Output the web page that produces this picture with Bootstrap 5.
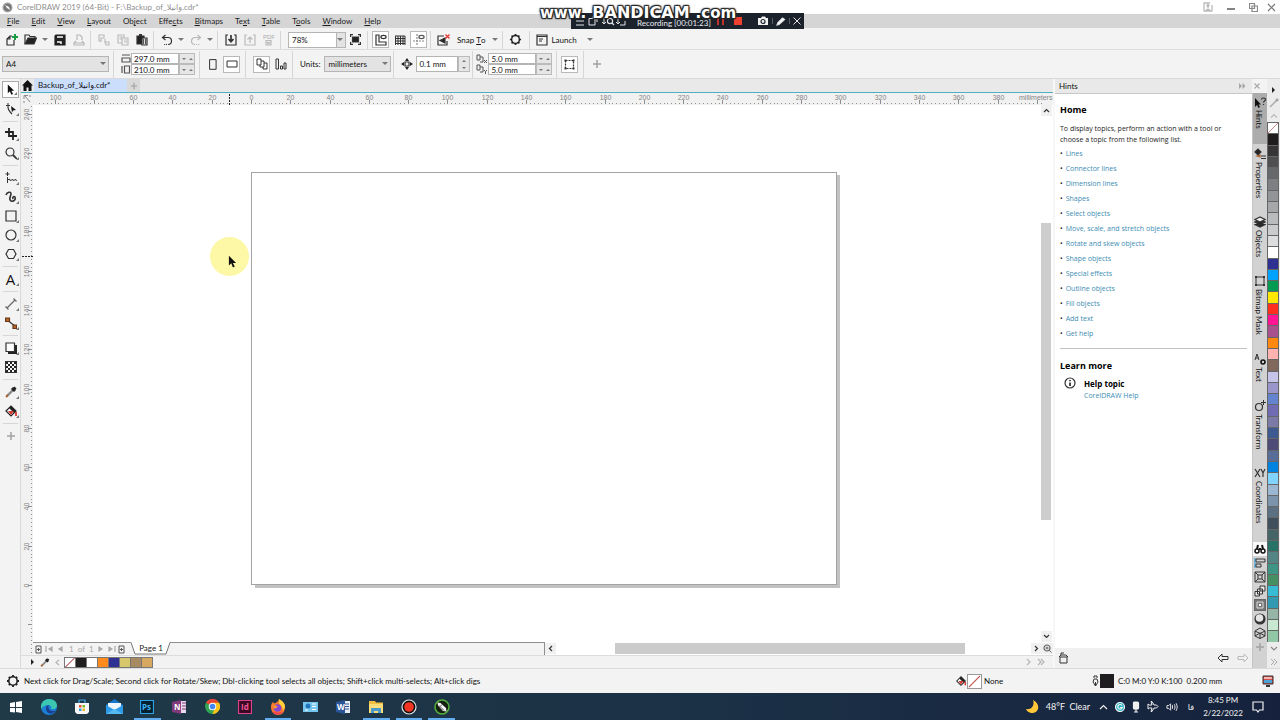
<!DOCTYPE html>
<html lang="en">
<head>
<meta charset="utf-8">
<meta name="viewport" content="width=device-width, initial-scale=1">
<title>CorelDRAW 2019 (64-Bit)</title>
<link rel="stylesheet" href="https://cdn.jsdelivr.net/npm/bootstrap@5.3.0/dist/css/bootstrap.min.css">
<style>
:root{--bar:#f3f3f3}
body{font:8px/12px Lato,"DejaVu Sans",sans-serif;color:#111;background:var(--bar);height:100vh;overflow:hidden}
svg{display:block;fill:none;stroke:#333;stroke-width:1.2;flex:none}
svg text{stroke:none}
button,select,input{font:inherit;color:inherit;border-radius:0}
button{border:0;background:none;padding:0;display:flex;align-items:center;justify-content:center;flex:none}
.titlebar{height:14px;background:#fff;color:#8e8e8e;padding:0 4px 0 2px}
.winctl{gap:14px}
.winctl button:last-child{margin-left:-5px}
.menubar{height:14px;background:#d5d5d5;padding-left:7px;color:#1c1c1c;gap:12px}
.menubar a{color:inherit;text-decoration:none;line-height:15px}
.menubar u{text-underline-offset:1px}
.toolrow{height:22px;padding:2px 0 0 2px;border-bottom:1px solid #dcdcdc}
.proprow{height:29px;padding-left:2px;border-bottom:1px solid #d9d9d9}
.tbtn{width:19px;height:19px}
.boxed{background:#fff;border:1px solid #b9b9b9;width:17px;height:17px;margin:0 1px}
.caret{width:10px;height:16px;justify-content:flex-start;padding-left:2px}
.caret::before,.drop::after{content:"";border:3px solid transparent;border-top:3px solid #777;border-bottom:0}
.vline{width:1px;height:18px;background:#d6d6d6;margin:0 3px 0 2px;flex:none}
.proprow .vline{height:27px}
.drop{position:relative}
.drop::after{position:absolute;right:3px;top:6px;pointer-events:none}
.drop select{appearance:none;border:1px solid #b5b5b5;background:#e3e3e3;height:16px;padding:0 3px;width:100%;display:block;line-height:12px}
.drop.zoomlevel select{background:linear-gradient(90deg,#fff 47px,#b5b5b5 47px,#b5b5b5 48px,#e3e3e3 48px)}
.pair{width:48px}
.pair input,.nudge input{border:1px solid #b5b5b5;background:#fff;height:11px;padding:0 2px;line-height:9px;min-width:0;display:block}
.spin{border:1px solid #bbb;background:#e6e6e6;width:16px;height:11px}
.spin i{border:2px solid transparent;width:0;height:0}
.spin .dn{border-top:2px solid #777;border-bottom:0}
.spin .up{border-bottom:2px solid #777;border-top:0}
.toolbox{width:21px;padding:1px 0 0 1px;border-right:1px solid #d9d9d9;background:var(--bar)}
.toolbox button{width:19px;height:19px;position:relative}
.toolbox .fly::after{content:"";position:absolute;right:1px;bottom:2px;border-left:3px solid transparent;border-bottom:3px solid #777}
.toolbox .active{background:#fff;border:1px solid #aaa;width:17px;height:17px;margin:1px}
.hline{width:15px;height:1px;background:#d6d6d6;margin:3px 2px 2px}
.tabstrip{height:14px;background:#e9e9e9;border-bottom:1px solid #4fb0c4}
.doctab{background:#cbdffc;height:13px;width:93px;padding-left:4px;line-height:13px}
.plustab{background:#d9d9d9;height:13px;width:13px}
.rulerrow{height:12px}
.corner,.vruler{width:12px;background:#f1f1f1}
.hruler{background:#f1f1f1}
svg.ruler{stroke:#8f8f8f;stroke-width:1;width:100%}
svg.ruler text{font:7px "Liberation Sans",sans-serif;fill:#858585}
.canvas{background:#fff;position:relative}
.sheet{position:absolute;left:218px;top:67px;width:586px;height:413px;border:1px solid #a3a3a3;background:#fff;box-shadow:4px 3px 0 -1px #c2c2c2,3px 3px 0 0 #c2c2c2;clip-path:polygon(0 0,586px 0,586px 3px,590px 3px,590px 417px,4px 417px,4px 413px,0 413px)}
.spot{position:absolute;left:177px;top:132px;width:39px;height:39px;border-radius:50%;background:#fcf8a6}
.spot svg{position:absolute;left:18px;top:18px}
.vscroll{width:12px;background:#fff}
.vscroll button{width:11px;height:11px;background:#f0f0f0}
.vthumb{background:#cdcdcd;height:297px;width:10px;margin-top:107px}
.navrow{height:13px;background:#fff}
.pagenav{width:512px;background:var(--bar);border-top:1px solid #8e8e8e;border-right:1px solid #8e8e8e;color:#a8a8a8;padding-left:1px}
.pagenav svg{stroke:#a8a8a8}
.pagetab{position:relative;width:40px;height:13px;margin-top:-1px;text-align:center;color:#222}
.pagetab svg{position:absolute;left:0;top:0}
.pagetab span{position:relative}
.hthumb{background:#cbcbcb;height:11px;width:350px;margin-left:59px}
.navbtn{width:11px;height:11px;background:#f0f0f0}
.palrow{height:13px;background:#f2f2f2;border-top:1px solid #dcdcdc}
.sw{width:12px;height:11px;border:1px solid #777;margin-right:-1px}
.hints{width:199px;border-left:2px solid #f7f7f7;background:#fff}
.hinthead{height:15px;background:#e9e9e9;border-bottom:1px solid #c6c6c6;padding:0 4px 0 4px;line-height:13px}
.hintbody{padding:9px 5px 0 5px;font:7px/11px "Open Sans",sans-serif;color:#1d1d1d}
.hintbody h1,.hintbody h2{font:bold 9px/14px "Open Sans",sans-serif;color:#000;margin:0}
.hintbody h3{font:bold 8px/13px "Open Sans",sans-serif;color:#000;margin:0}
.hintbody p{margin:6px 0 1px}
.hintbody a{color:#3e8db3;text-decoration:none}
.hintbody ul{list-style:none;padding:0;margin:0}
.hintbody li{line-height:15px;display:flex;gap:3px}
.hintbody li::before{content:"•"}
.hintbody hr{margin:7px 0 10px;border-color:#999;opacity:.6}
.hintfoot{height:20px;background:#f0f0f0;padding:0 3px}
.dockers{width:15px;background:#d2d2d2;border-left:1px solid #c4c4c4;margin-top:14px}
.dockers .dtab{width:14px;flex-direction:column;justify-content:flex-start;gap:2px;padding:4px 0 14px;line-height:12px}
.dtab span{writing-mode:vertical-rl;padding-right:3px}
.dockers .current{background:#acacac;height:51px;padding-bottom:0}
.dockers .mini{width:14px;height:14px}
.minis{margin-bottom:14px}
.colors{width:13px;background:#ececec}
.colors .cell{flex:1 1 0;width:12px;border:1px solid #666;border-bottom-width:0;min-height:0}
.colors button{width:13px;height:13px}
.statusbar{height:25px;background:var(--bar);border-top:1px solid #dadada;padding:0 6px}
.taskbar{height:27px;background:linear-gradient(90deg,#203a48,#1b3146 55%,#16223d);color:#f2f2f2}
.apps{display:grid;grid-template-columns:repeat(14,1fr);width:458px}
.apps button{height:27px;position:relative;width:100%}
.apps .open::after{content:"";position:absolute;left:3px;right:3px;bottom:0;height:2px;background:#62aef0}
.tray svg{stroke:#f0f0f0}
.tray{gap:7px}
.temp{font-size:9px;width:46px}
.gap-tray{margin-right:3px}
.clock{line-height:13px;width:44px}
.recbar{position:absolute;left:571px;top:13px;width:233px;height:16px;background:#1b222c;color:#e9ebee;font-size:8px;padding-left:5px}
.recbar svg{stroke:#e0e3e6}
.rectime{margin:3px 7px 0 9px;width:73px}
.mark-url{position:absolute;left:540px;top:4px;height:18px;display:flex;align-items:baseline;gap:6px;color:#fff;font:bold 15px/18px "DejaVu Sans",sans-serif;text-shadow:-1px -1px 1px #222,1px -1px 1px #222,-1px 1px 1px #222,1px 1px 1px #222,0 0 3px #444}
.mark-url b{font-size:16px}
</style>
</head>
<body class="d-flex flex-column">

<svg width="0" height="0" class="position-absolute">
<symbol id="gear" viewBox="0 0 14 14"><circle cx="7" cy="7" r="4.2" stroke="#222" stroke-width="1.6"/><path d="M7 1v2M7 11v2M1 7h2M11 7h2M2.8 2.8l1.3 1.3M9.900 9.900l1.3 1.3M2.8 11.2l1.3-1.3M9.900 4.1l1.3-1.3" stroke="#222" stroke-width="1.8"/></symbol>
<symbol id="bucket" viewBox="0 0 14 14"><path d="M2 7l5-5 5 5-5 5z" fill="#fff" stroke="#222"/><path d="M7 2l5 5-2 2-5-5z" fill="#222" stroke="none"/><path d="M4 7h6l-3 4z" fill="#d43a33" stroke="none"/><path d="M12 8v4" stroke="#d43a33" stroke-width="1.8"/></symbol>
<symbol id="dropper" viewBox="0 0 14 14"><path d="M3 11l6-6" stroke="#8a8a8a" stroke-width="2.4"/><path d="M8 3l3 3M9.500 4.500l2-2" stroke="#222" stroke-width="3"/><path d="M2 12l2-2" stroke="#a8622d" stroke-width="2"/></symbol>
<symbol id="plus" viewBox="0 0 10 10"><path d="M5 1v8M1 5h8" stroke="#a2a2a2" stroke-width="1.5"/></symbol>
<symbol id="pointer" viewBox="0 0 10 14"><path d="M1 0v11l2.600-2.500L5.500 13l2-1-2-4H9z" fill="#111" stroke="none"/></symbol>
<symbol id="pages" viewBox="0 0 14 14"><path d="M2 2h4v6H2zM6 4h3v6H5V8M9 6h3v6H8v-2" stroke-width="1"/></symbol>
<symbol id="slash" viewBox="0 0 14 14" preserveAspectRatio="none"><path d="M1 13L13 1" stroke="#c0504a"/></symbol>
</svg>

<header class="titlebar d-flex align-items-center">
  <svg width="11" height="11" viewBox="0 0 11 11"><circle cx="5.500" cy="5.500" r="4.500" fill="#777" stroke="#aaa"/><path d="M3 3l4 2 1 3-3-2z" fill="#fff" stroke="none"/></svg>
  <span class="ms-1">CorelDRAW 2019 (64-Bit) - F:\Backup_of_وانيلا.cdr*</span>
  <div class="winctl ms-auto d-flex align-items-center">
    <button aria-label="Account"><svg width="10" height="10" viewBox="0 0 10 10" style="stroke:#bbb"><path d="M9 3v6H1V1h6M3 7.500h4M5 3v3" stroke-width="1.300"/><circle cx="5" cy="3.500" r="1" fill="#aaa"/></svg></button>
    <button aria-label="Minimize"><svg width="8" height="10" viewBox="0 0 8 10"><path d="M0 7h8" stroke="#777" stroke-width="1.800"/></svg></button>
    <button aria-label="Restore"><svg width="9" height="9" viewBox="0 0 9 9"><path d="M.5.500h5v5h-5zM3 3h5.500v5.500H3z" fill="#fff" stroke="#888"/></svg></button>
    <button aria-label="Close"><svg width="9" height="9" viewBox="0 0 9 9"><path d="M1 1l7 7M8 1L1 8" stroke="#777"/></svg></button>
  </div>
</header>

<nav class="menubar d-flex">
  <a href="#"><u>F</u>ile</a><a href="#"><u>E</u>dit</a><a href="#"><u>V</u>iew</a><a href="#"><u>L</u>ayout</a><a href="#">Ob<u>j</u>ect</a><a href="#">Effe<u>c</u>ts</a><a href="#"><u>B</u>itmaps</a><a href="#">Te<u>x</u>t</a><a href="#"><u>T</u>able</a><a href="#">T<u>o</u>ols</a><a href="#"><u>W</u>indow</a><a href="#"><u>H</u>elp</a>
</nav>

<div class="toolrow d-flex align-items-center">
  <button class="tbtn" aria-label="New"><svg width="13" height="13" viewBox="0 0 13 13"><path d="M7 3H5L2 6v6h7V7M2 6h3V3"/><path d="M10 1v6M7 4h6" stroke="#1b9a45" stroke-width="2"/></svg></button>
  <button class="tbtn" aria-label="Open"><svg width="13" height="13" viewBox="0 0 13 13"><path d="M1 11V2h4l1 1.500h5V6"/><path d="M1 11l3-6h8.500L10 11z" fill="#222"/></svg></button>
  <button class="caret" aria-label="Recent files"></button>
  <button class="tbtn" aria-label="Save"><svg width="12" height="12" viewBox="0 0 12 12"><path d="M1 2l1-1h9v10H1z" fill="#222" stroke="#222"/><path d="M3 3h6M3 8h4v2" stroke="#fff" stroke-width="1.500"/></svg></button>
  <button class="tbtn" aria-label="Print"><svg width="12" height="12" viewBox="0 0 12 12" style="stroke:#b8b8b8"><path d="M4 6V1h3l2 2v3M3 7L1 9v2h10V9L9 7M1 9h10"/></svg></button>
  <span class="vline"></span>
  <button class="tbtn" aria-label="Cut"><svg width="12" height="12" viewBox="0 0 12 12" style="stroke:#bcbcbc"><path d="M1 1h5v3H3v3H1zM3 7v1M7 5v4M7 8h4v3H8z"/></svg></button>
  <button class="tbtn" aria-label="Copy"><svg width="12" height="12" viewBox="0 0 12 12" style="stroke:#bcbcbc"><path d="M5 9H1V1h6v3M5 4h6v7H5zM2.500 3h3M2.500 5h2M7 6h3M7 8h3"/></svg></button>
  <button class="tbtn" aria-label="Paste"><svg width="12" height="12" viewBox="0 0 12 12"><path d="M1 2h7v8H1z" fill="#222"/><path d="M3 1h3" stroke-width="2"/><path d="M6 4h5v7H6z" fill="#ddd"/><path d="M7.500 5v5M9.500 5v5" stroke-width=".8"/></svg></button>
  <span class="vline"></span>
  <button class="tbtn" aria-label="Undo"><svg width="12" height="12" viewBox="0 0 12 12"><path d="M4.500 1L1.500 3.500 4.500 6M2 3.500h5a3.500 3.500 0 010 7" /><path d="M6 10.500H3" stroke-dasharray="1.200 1"/></svg></button>
  <button class="caret" aria-label="Undo list"></button>
  <button class="tbtn" aria-label="Redo"><svg width="12" height="12" viewBox="0 0 12 12" style="stroke:#b8b8b8"><path d="M7.500 1l3 2.500-3 2.500M10 3.500H5a3.500 3.500 0 000 7"/><path d="M6 10.500h4" stroke-dasharray="1.200 1"/></svg></button>
  <button class="caret" aria-label="Redo list"></button>
  <span class="vline"></span>
  <button class="tbtn" aria-label="Import"><svg width="12" height="12" viewBox="0 0 12 12"><path d="M3 1H1v10h10V1H9"/><path d="M6 1v6M3.500 5L6 7.800 8.500 5" stroke-width="1.700"/></svg></button>
  <button class="tbtn" aria-label="Export"><svg width="12" height="12" viewBox="0 0 12 12" style="stroke:#bbb"><path d="M3 1H1v10h10V1H9M6 9V3M3.500 5.500L6 3l2.500 2.500"/></svg></button>
  <button class="tbtn" aria-label="Publish to PDF"><svg width="12" height="12" viewBox="0 0 12 12" style="stroke:#bbb"><path d="M3 6.500h5V11H3zM4 8l3 2M7 8l-3 2"/><text x="0" y="5" font-size="6" font-family="Liberation Sans" fill="#aaa">PDF</text></svg></button>
  <span class="vline"></span>
  <div class="drop zoomlevel ms-1" style="width:58px"><select aria-label="Zoom level"><option>78%</option></select></div>
  <button class="tbtn" aria-label="Full-screen preview"><svg width="11" height="11" viewBox="0 0 11 11"><path d="M.6 3V.6H3M8 .6h2.400V3M10.400 8v2.400H8M3 10.400H.6V8"/><path d="M2.500 3h6v5h-6z" fill="#222"/></svg></button>
  <span class="vline"></span>
  <button class="tbtn boxed" aria-label="Show rulers"><svg width="12" height="12" viewBox="0 0 12 12"><path d="M1 1h3v7h7v3H1z"/><ellipse cx="8.500" cy="3" rx="2.600" ry="1.600"/></svg></button>
  <button class="tbtn" aria-label="Show grid"><svg width="12" height="12" viewBox="0 0 12 12"><path d="M1 2h10M1 4.500h10M1 7h10M1 9.500h10M1.500 2v9M4 2v9M6.500 2v9M9 2v9M11 2v9" stroke-width="1"/></svg></button>
  <button class="tbtn boxed" aria-label="Show guidelines"><svg width="12" height="12" viewBox="0 0 12 12" style="stroke:#888"><path d="M4 0v12M0 7h12" stroke-dasharray="2 1"/><ellipse cx="8.500" cy="3" rx="2.600" ry="1.600" stroke="#555"/></svg></button>
  <span class="vline"></span>
  <button class="tbtn" aria-label="Snap off"><svg width="13" height="12" viewBox="0 0 13 12"><path d="M7 2H1v9h9V7" /><path d="M3 6.500L8 4v5z" fill="#222"/><path d="M8.500.500l4 4M12.500.500l-4 4" stroke="#e0362f" stroke-width="1.300"/></svg></button>
  <button class="ms-1">Snap&nbsp;<u>T</u>o</button>
  <button class="caret ms-1" aria-label="Snap options"></button>
  <span class="vline"></span>
  <button class="tbtn" aria-label="Options"><svg width="13" height="13"><use href="#gear"/></svg></button>
  <span class="vline ms-1"></span>
  <button class="tbtn" aria-label="Application launcher"><svg width="12" height="12" viewBox="0 0 12 12"><path d="M1 1h10v10H1zM1 2.500h10"/><path d="M3 5h4M3 7h3" stroke-width="1"/></svg></button>
  <button>Launch</button>
  <button class="caret ms-2" aria-label="Launch list"></button>
</div>

<div class="proprow d-flex align-items-center">
  <div class="drop" style="width:107px"><select aria-label="Page size"><option>A4</option></select></div>
  <span class="vline ms-1"></span>
  <svg class="ms-1" width="10" height="22" viewBox="0 0 10 22"><path d="M1 5h8v4H1zM1 2h8M3.500 13h5v7h-5zM1 13v7" stroke="#555"/></svg>
  <div class="pair d-flex flex-column"><input type="text" aria-label="Page width" value="297.0 mm"><input type="text" aria-label="Page height" value="210.0 mm"></div>
  <div><div class="spin d-flex align-items-center justify-content-around"><i class="dn"></i><i class="up"></i></div><div class="spin d-flex align-items-center justify-content-around"><i class="dn"></i><i class="up"></i></div></div>
  <span class="vline ms-1"></span>
  <button class="tbtn" aria-label="Portrait"><svg width="8" height="11" viewBox="0 0 8 11"><path d="M.6.600h6.500v9.700H.6z" stroke-width="1"/></svg></button>
  <button class="tbtn boxed" aria-label="Landscape"><svg width="12" height="8" viewBox="0 0 12 8"><path d="M1 1h10v6H1z" stroke-width="1"/></svg></button>
  <span class="vline ms-1"></span>
  <button class="tbtn boxed ms-1" aria-label="All pages"><svg width="14" height="14"><use href="#pages"/></svg></button>
  <button class="tbtn" aria-label="Current page"><svg width="12" height="12" viewBox="0 0 12 12"><path d="M1 1h2.500v10H1zM5.500 8h2v3h-2zM9 5h2v6H9z" stroke-width="1"/></svg></button>
  <span class="vline"></span>
  <label class="ms-1" for="units">Units:</label>
  <div class="drop ms-1" style="width:67px"><select id="units"><option>millimeters</option></select></div>
  <span class="vline"></span>
  <button class="tbtn" aria-label="Nudge distance icon"><svg width="12" height="12" viewBox="0 0 12 12"><path d="M6 0l2 3H4zM6 12l2-3H4zM0 6l3-2v4zM12 6L9 4v4z" fill="#222" stroke="none"/><path d="M4 4h4v4H4z"/></svg></button>
  <div class="nudge d-flex"><input type="text" aria-label="Nudge distance" value="0.1 mm" style="width:42px;height:16px"><div class="spin d-flex flex-column align-items-center justify-content-around" style="width:12px;height:16px"><i class="up"></i><i class="dn"></i></div></div>
  <span class="vline"></span>
  <svg width="12" height="22" viewBox="0 0 12 22"><path d="M1 2h3v5H1zM4 4h3v5H4M1 12h3v5H1zM4 14h3v5H4M8 7l3 3M11 7l-3 3M8 17l1.500 1.500L11 17M9.500 18.500V21" stroke="#555" stroke-width="1"/></svg>
  <div class="pair d-flex flex-column"><input type="text" aria-label="Duplicate distance X" value="5.0 mm"><input type="text" aria-label="Duplicate distance Y" value="5.0 mm"></div>
  <div><div class="spin d-flex align-items-center justify-content-around"><i class="dn"></i><i class="up"></i></div><div class="spin d-flex align-items-center justify-content-around"><i class="dn"></i><i class="up"></i></div></div>
  <span class="vline ms-1"></span>
  <button class="tbtn boxed" aria-label="Treat as filled"><svg width="13" height="13" viewBox="0 0 13 13"><path d="M2.500 2.500h8v8h-8z" stroke-dasharray="2 1"/><path d="M1.500 2.500h2M9.500 2.500h2M1.500 10.500h2M9.500 10.500h2" stroke-width="2"/></svg></button>
  <span class="vline ms-1"></span>
  <button class="tbtn" aria-label="Customize"><svg width="10" height="10"><use href="#plus"/></svg></button>
</div>

<main class="d-flex flex-grow-1" style="min-height:0">
  <aside class="toolbox flex-shrink-0 d-flex flex-column">
    <button class="fly active" aria-label="Pick"><svg width="8" height="12"><use href="#pointer"/></svg></button>
    <button class="fly" aria-label="Shape"><svg width="12" height="13" viewBox="0 0 12 13"><path d="M3 1v4M1 3.500h4" stroke-width="1"/><path d="M3 5c0 3 2 5 4 7"/><path d="M6 4l5 4-3 .5-1 2z" fill="#111" stroke="none"/></svg></button>
    <span class="hline"></span>
    <button class="fly" aria-label="Crop"><svg width="12" height="12" viewBox="0 0 12 12"><path d="M4 0v8h8M0 4h8v8" stroke="#222" stroke-width="1.800"/></svg></button>
    <button class="fly" aria-label="Zoom"><svg width="12" height="12" viewBox="0 0 12 12"><circle cx="5" cy="5" r="4"/><path d="M8 8l4 4" stroke-width="1.800"/></svg></button>
    <span class="hline"></span>
    <button class="fly" aria-label="Freehand"><svg width="12" height="12" viewBox="0 0 12 12"><path d="M2.500 0v4M.500 2h4M2.500 5v6M2.500 8l2-1 1 2 2-2 1 2 2-2 1 2" stroke-width="1"/></svg></button>
    <button class="fly" aria-label="Artistic media"><svg width="12" height="12" viewBox="0 0 12 12"><path d="M1 4C2 1 6 0 6 3c0 2-3 5 0 7 3 1 5-2 4-4-1-1-3 0-2 2" stroke-width="1.600"/></svg></button>
    <button class="fly" aria-label="Rectangle"><svg width="12" height="12" viewBox="0 0 12 12"><path d="M1 1h10v10H1z"/></svg></button>
    <button class="fly" aria-label="Ellipse"><svg width="12" height="12" viewBox="0 0 12 12"><circle cx="6" cy="6" r="5"/></svg></button>
    <button class="fly" aria-label="Polygon"><svg width="12" height="12" viewBox="0 0 12 12"><path d="M3.500 1.500h5L11 6l-2.500 4.500h-5L1 6z"/></svg></button>
    <span class="hline"></span>
    <button class="fly" aria-label="Text"><span style="font:15px/16px 'Open Sans',sans-serif">A</span></button>
    <span class="hline"></span>
    <button class="fly" aria-label="Dimension"><svg width="12" height="12" viewBox="0 0 12 12"><path d="M2 10l8-8M8.500.500l3 3M.500 8.500l3 3" stroke="#666"/></svg></button>
    <button class="fly" aria-label="Connector"><svg width="12" height="12" viewBox="0 0 12 12"><path d="M2 3l8 6"/><path d="M.5 1h4v3.500h-4zM8 8h3.500v3.500H8z" fill="#b5662a" stroke="#6b3a18"/></svg></button>
    <span class="hline"></span>
    <button class="fly" aria-label="Drop shadow"><svg width="12" height="12" viewBox="0 0 12 12"><path d="M3 11h8V3" stroke="#222" stroke-width="2"/><path d="M1 1h8.500v8.500H1z" fill="#fff"/></svg></button>
    <button aria-label="Transparency"><svg width="12" height="12" viewBox="0 0 12 12"><path d="M.5.500h11v11H.5z"/><path d="M1 2h10M1 6h10M1 10h10" stroke="#222" stroke-width="2" stroke-dasharray="2 2"/><path d="M3 4h8M3 8h8" stroke="#222" stroke-width="2" stroke-dasharray="2 2"/></svg></button>
    <span class="hline"></span>
    <button class="fly" aria-label="Color eyedropper"><svg width="14" height="14"><use href="#dropper"/></svg></button>
    <button class="fly" aria-label="Interactive fill"><svg width="14" height="14"><use href="#bucket"/></svg></button>
    <span class="hline"></span>
    <button aria-label="Customize toolbox"><svg width="10" height="10"><use href="#plus"/></svg></button>
  </aside>

  <section class="d-flex flex-column flex-grow-1" style="min-width:0">
    <div class="tabstrip d-flex">
      <button aria-label="Welcome screen" style="width:13px"><svg width="11" height="11" viewBox="0 0 11 11"><path d="M0 5.500L5.500 0 11 5.500H9.500V11h-3V7.500h-2V11h-3V5.500z" fill="#111" stroke="none"/></svg></button>
      <div class="doctab">Backup_of_وانيلا.cdr*</div>
      <button class="plustab" aria-label="New document"><svg width="8" height="8"><use href="#plus" width="8" height="8"/></svg></button>
    </div>
    <div class="rulerrow d-flex">
      <div class="corner flex-shrink-0"><svg width="12" height="12" viewBox="0 0 12 12" style="stroke:#888"><path d="M4 3l5 6M3 6V2.500h4M8 3h2M3 8v2" stroke-width="1"/></svg></div>
      <div class="hruler flex-grow-1"><svg class="ruler" id="hruler" height="12"></svg></div>
    </div>
    <div class="d-flex flex-grow-1" style="min-height:0">
      <div class="vruler flex-shrink-0 overflow-hidden"><svg class="ruler" id="vruler" height="100%"></svg></div>
      <div class="d-flex flex-column flex-grow-1" style="min-width:0">
        <div class="d-flex flex-grow-1" style="min-height:0">
          <div class="canvas flex-grow-1 overflow-hidden">
            <div class="sheet"></div>
            <div class="spot"><svg width="9" height="14"><use href="#pointer"/></svg></div>
          </div>
          <div class="vscroll d-flex flex-column">
            <button aria-label="Scroll up"><svg width="7" height="5" viewBox="0 0 7 5"><path d="M1 4l2.500-2.500L6 4"/></svg></button>
            <div class="vthumb"></div>
            <button class="mt-auto" aria-label="Scroll down"><svg width="7" height="5" viewBox="0 0 7 5"><path d="M1 1l2.500 2.500L6 1"/></svg></button>
          </div>
        </div>
        <div class="navrow d-flex align-items-center">
          <div class="pagenav d-flex align-items-center h-100">
            <button aria-label="Add page before"><svg width="10" height="9" viewBox="0 0 10 9" style="stroke:#555"><path d="M2 1h5v7H2zM4.500 3v3M3 4.500h3" stroke-width="1"/></svg></button>
            <button aria-label="First page"><svg width="11" height="8" viewBox="0 0 11 8"><path d="M2 1v6"/><path d="M8 2v4L5 4z" fill="#aaa"/></svg></button>
            <button aria-label="Previous page"><svg width="10" height="8" viewBox="0 0 10 8"><path d="M7 2v4L4 4z" fill="#aaa"/></svg></button>
            <span class="ms-1" style="width:27px">1&nbsp; of&nbsp; 1</span>
            <button aria-label="Next page"><svg width="10" height="8" viewBox="0 0 10 8"><path d="M3 2v4l3-2z" fill="#aaa"/></svg></button>
            <button aria-label="Last page"><svg width="11" height="8" viewBox="0 0 11 8"><path d="M3 2v4l3-2zM9 1v6" fill="#aaa"/></svg></button>
            <button aria-label="Add page after"><svg width="10" height="9" viewBox="0 0 10 9" style="stroke:#555"><path d="M2 1h5v7H2zM4.500 3v3M3 4.500h3" stroke-width="1"/></svg></button>
            <div class="pagetab ms-1"><svg width="40" height="13" viewBox="0 0 40 13"><path d="M0 0l4 12h31l4-12z" fill="#fff" stroke="none"/><path d="M0 .5l4 11.500h31L39 .5" stroke="#777" stroke-width="1"/></svg><span>Page 1</span></div>
          </div>
          <button class="navbtn" aria-label="Scroll left"><svg width="5" height="7" viewBox="0 0 5 7"><path d="M4 1L1.500 3.500 4 6"/></svg></button>
          <div class="flex-grow-1"><div class="hthumb"></div></div>
          <button class="navbtn" aria-label="Scroll right"><svg width="5" height="7" viewBox="0 0 5 7"><path d="M1 1l2.500 2.500L1 6"/></svg></button>
          <button class="navbtn" aria-label="Navigator"><svg width="9" height="9" viewBox="0 0 9 9" style="stroke:#666"><circle cx="4" cy="4" r="3"/><path d="M6 6l2.500 2.500M4 2.500v3M2.500 4h3" stroke-width="1"/></svg></button>
        </div>
      </div>
    </div>
    <div class="palrow d-flex align-items-center">
      <button class="ms-2" aria-label="Palette menu"><svg width="6" height="6" viewBox="0 0 6 6"><path d="M2 0l3 3-3 3z" fill="#222" stroke="none"/></svg></button>
      <button class="ms-1" aria-label="Sample color"><svg width="12" height="11"><use href="#dropper"/></svg></button>
      <button class="ms-1 me-1" aria-label="Scroll palette left"><svg width="5" height="7" viewBox="0 0 5 7"><path d="M4 1L1 3.500 4 6" stroke="#b5b5b5"/></svg></button>
      <div class="d-flex" id="docpalette"></div>
      <span class="ms-auto"></span>
      <svg class="me-2" width="20" height="8" viewBox="0 0 20 8" style="stroke:#b5b5b5"><path d="M2 1l3 3-3 3M13 1l3 3-3 3M16 1l3 3-3 3"/></svg>
    </div>
  </section>

  <aside class="hints flex-shrink-0 d-flex flex-column">
    <div class="hinthead d-flex align-items-center"><span>Hints</span>
      <button class="ms-auto" aria-label="Collapse"><svg width="7" height="6" viewBox="0 0 7 6"><path d="M0 0l3 3-3 3zM3.500 0l3 3-3 3z" fill="#a5a5a5" stroke="none"/></svg></button>
      <button class="ms-2" style="margin-right:-12px" aria-label="Close docker"><svg width="6" height="6" viewBox="0 0 6 6"><path d="M.5.500l5 5M5.500.500l-5 5" stroke="#aaa"/></svg></button>
    </div>
    <div class="hintbody flex-grow-1">
      <h1>Home</h1>
      <p>To display topics, perform an action with a tool or<br>choose a topic from the following list.</p>
      <ul>
        <li><a href="#">Lines</a></li><li><a href="#">Connector lines</a></li><li><a href="#">Dimension lines</a></li><li><a href="#">Shapes</a></li><li><a href="#">Select objects</a></li><li><a href="#">Move, scale, and stretch objects</a></li><li><a href="#">Rotate and skew objects</a></li><li><a href="#">Shape objects</a></li><li><a href="#">Special effects</a></li><li><a href="#">Outline objects</a></li><li><a href="#">Fill objects</a></li><li><a href="#">Add text</a></li><li><a href="#">Get help</a></li>
      </ul>
      <hr>
      <h2>Learn more</h2>
      <div class="d-flex mt-1"><svg class="me-2 ms-1" width="12" height="12" viewBox="0 0 12 12"><circle cx="6" cy="6" r="5"/><path d="M6 5.500v3.500M6 3v1.200" stroke="#111" stroke-width="1.500"/></svg>
        <div><h3>Help topic</h3><a href="#">CorelDRAW Help</a></div></div>
    </div>
    <div class="hintfoot d-flex align-items-center">
      <button aria-label="Hints home"><svg width="11" height="12" viewBox="0 0 11 12"><path d="M2 5h7v6H2zM1 5l2-2h5l2 2M3 3V1h3" stroke-width="1"/></svg></button>
      <button class="ms-auto" aria-label="Back"><svg width="12" height="10" viewBox="0 0 12 10"><path d="M1 5l4-4v2.500h6v3H5V9z" stroke-width="1"/></svg></button>
      <button class="ms-2" aria-label="Forward"><svg width="12" height="10" viewBox="0 0 12 10"><path d="M11 5L7 1v2.500H1v3h6V9z" stroke="#bbb" stroke-width="1"/></svg></button>
    </div>
  </aside>

  <aside class="dockers flex-shrink-0 d-flex flex-column">
    <button class="dtab current"><svg width="13" height="11" viewBox="0 0 13 11"><path d="M1 1v9l2-2 1.500 3L6 10 4.500 7.500H7z" fill="#111" stroke="none"/><path d="M7.500 2.500c0-2 4-2 4 0 0 1.500-2 1.500-2 3M9.500 7v1"/></svg><span>Hints</span></button>
    <button class="dtab"><svg width="13" height="12" viewBox="0 0 13 12"><path d="M1 4l3-3 3 3-3 3z" fill="#222"/><path d="M3 8l3-1v2z" fill="#d98a2a" stroke="#a8622d"/><path d="M7 8h5M7 10.500h5"/></svg><span>Properties</span></button>
    <button class="dtab"><svg width="12" height="12" viewBox="0 0 12 12"><path d="M6 6L1 8.500 6 11l5-2.500zM6 3.500L1 6l5 2.500L11 6z" fill="#222"/><path d="M6 1L1 3.500 6 6l5-2.500z" fill="#eee"/></svg><span>Objects</span></button>
    <button class="dtab"><svg width="12" height="12" viewBox="0 0 12 12"><path d="M2 2h8v8H2z" stroke-width="1"/><path d="M1 2h2M9 2h2M1 10h2M9 10h2" stroke-width="2"/></svg><span>Bitmap Mask</span></button>
    <button class="dtab"><svg width="12" height="12" viewBox="0 0 12 12"><path d="M1 7l2-6 2 6M1.500 5h3" stroke-width="1"/><circle cx="9" cy="9" r="2" stroke="#111" stroke-width="1.600"/></svg><span>Text</span></button>
    <button class="dtab"><svg width="12" height="12" viewBox="0 0 12 12"><circle cx="5" cy="7" r="3.500"/><path d="M9.500 0v5M7 2.500h5" stroke-width="1"/></svg><span>Transform</span></button>
    <button class="dtab"><svg width="12" height="12" viewBox="0 0 12 12"><path d="M1 2l5 8M6 2l-5 8M7 2l2 4 2-4M9 6v4"/></svg><span>Coordinates</span></button>
    <div class="minis mt-auto">
      <button class="mini bg-light" aria-label="Find"><svg width="12" height="12" viewBox="0 0 12 12"><circle cx="3" cy="8" r="2" stroke="#111" stroke-width="1.500"/><circle cx="9" cy="8" r="2" stroke="#111" stroke-width="1.500"/><path d="M3 6l1-4M9 6L8 2M5 6h2" stroke="#111" stroke-width="2"/></svg></button>
      <button class="mini" aria-label="Align"><svg width="12" height="12" viewBox="0 0 12 12"><path d="M1 1v10" stroke="#3aa0d8"/><path d="M2 2h9v3H2zM2 7h5v3H2z" stroke-width="1"/></svg></button>
      <button class="mini" aria-label="Lens"><svg width="12" height="12" viewBox="0 0 12 12"><path d="M1 1h10v10H1zM4 4h4v4H4zM1 1l3 3M11 1L8 4M1 11l3-3M11 11L8 8" stroke-width="1"/></svg></button>
      <button class="mini" aria-label="Blend"><svg width="12" height="12" viewBox="0 0 12 12"><path d="M6 1h5v5H6zM3.500 4h5v5h-5zM1 6.500h4.500V11H1z" fill="#e8e8e8" stroke-width="1"/></svg></button>
      <button class="mini" aria-label="Contour"><svg width="12" height="12" viewBox="0 0 12 12"><path d="M.5.500h11v11H.5z" fill="#777" stroke="#666"/><path d="M3 3h6v6H3z" fill="#777" stroke="#ddd" stroke-width="1"/><path d="M5 5h2v2H5z" fill="#fff" stroke="none"/></svg></button>
      <button class="mini" aria-label="Shadow"><svg width="12" height="12" viewBox="0 0 12 12"><circle cx="6" cy="6" r="5" fill="#333"/><circle cx="5.500" cy="5" r="3.800" fill="#e4e4e4" stroke="none"/></svg></button>
      <button class="mini" aria-label="Extrude"><svg width="12" height="12" viewBox="0 0 12 12"><path d="M1 4l5-3 5 3v5l-5 2.500L1 9zM1 4l5 2.500L11 4M6 6.500v5M1 9l5-3 5 3" stroke-width="1"/></svg></button>
      <button class="mini" aria-label="Add docker"><svg width="10" height="10"><use href="#plus"/></svg></button>
    </div>
  </aside>

  <aside class="colors flex-shrink-0 d-flex flex-column">
    <button aria-label="Palette flyout" style="margin-top:4px"><svg width="6" height="6" viewBox="0 0 6 6"><path d="M1 0l3 3-3 3z" fill="#222" stroke="none"/></svg></button>
    <button aria-label="Sample"><svg width="12" height="12" viewBox="0 0 12 12"><path d="M2 10l7-7" stroke="#aaa" stroke-width="1.500"/><path d="M8 2l2 2" stroke="#aaa" stroke-width="3"/></svg></button>
    <button aria-label="Scroll palette up"><svg width="8" height="6" viewBox="0 0 8 6"><path d="M1 4.500l3-3 3 3" stroke="#b9b9b9"/></svg></button>
    <div id="palette" class="d-flex flex-column flex-grow-1"></div>
    <button aria-label="Scroll palette down"><svg width="8" height="6" viewBox="0 0 8 6"><path d="M1 1l3 3 3-3" stroke="#888"/></svg></button>
    <button aria-label="Expand palette"><svg width="8" height="8" viewBox="0 0 8 8"><path d="M1 1l3 3-3 3M4 1l3 3-3 3" stroke="#aaa" stroke-width="1"/></svg></button>
  </aside>
</main>

<footer class="statusbar d-flex align-items-center">
  <svg width="14" height="14"><use href="#gear"/></svg>
  <span class="ms-1">Next click for Drag/Scale; Second click for Rotate/Skew; Dbl-clicking tool selects all objects; Shift+click multi-selects; Alt+click digs</span>
  <div class="ms-auto d-flex align-items-center" style="width:319px">
    <svg width="12" height="14"><use href="#bucket"/></svg>
    <svg width="15" height="15" style="background:#fff;border:1px solid #999"><use href="#slash"/></svg>
    <span style="width:109px;padding-left:2px">None</span>
    <svg width="9" height="12" viewBox="0 0 9 12"><path d="M4.500 11L2 7l1-3h3l1 3zM3 3V1h3v2M4.500 11V7" stroke-width="1"/></svg>
    <span style="width:14px;height:14px;background:#1f1d1f"></span>
    <span class="ms-1">C:0 M:0 Y:0 K:100&nbsp; 0.200 mm</span>
    <svg class="ms-auto" width="12" height="12" viewBox="0 0 12 12"><path d="M1 1h10v8H1z" fill="#d94c45" stroke-width="1"/><path d="M2 5h8v3H2z" fill="#48a2d6" stroke="none"/><path d="M2 3h8" stroke="#fff"/><path d="M4 11h4" stroke-width="2"/></svg>
  </div>
</footer>

<nav class="taskbar d-flex align-items-center">
  <div class="apps">
    <button aria-label="Start"><svg width="12" height="12" viewBox="0 0 12 12"><path d="M0 2l5-1v5H0zM6 1l6-1v6H6zM0 7h5v4.500L0 11zM6 7h6v5l-6-1z" fill="#fff" stroke="none"/></svg></button>
    <button aria-label="Edge"><svg width="16" height="16" viewBox="0 0 16 16" style="stroke:none"><circle cx="8" cy="8" r="8" fill="#1c7fd6"/><path d="M0 8C0 2 5 0 8 0c5 0 8 3 8 6.500 0 3-3 4-6 3.500 1-1 .5-4-3-4-3 0-6 2-7 4z" fill="#3cc7b0"/><path d="M5 9c0-2 2-3 3-2.500-1.500 2 0 5 3 5.500 2 .3 3-.3 4-1-2 5-10 5-10-2z" fill="#1b3f8c"/></svg></button>
    <button aria-label="Store"><svg width="16" height="16" viewBox="0 0 16 16"><path d="M5 4V1h6v3" stroke="#47a6e8"/><path d="M1 4h14v9l-2 2H3l-2-2z" fill="#f6f6f6" stroke="none"/><path d="M5 6h2.500v2.500H5z" fill="#e8502e" stroke="none"/><path d="M8.500 6H11v2.500H8.500z" fill="#7db828" stroke="none"/><path d="M5 9.500h2.500V12H5z" fill="#2c9fe0" stroke="none"/><path d="M8.500 9.500H11V12H8.500z" fill="#f2b41c" stroke="none"/></svg></button>
    <button aria-label="Mail"><svg width="17" height="15" viewBox="0 0 17 15" style="stroke:none"><path d="M0 6l8.500-6L17 6v9H0z" fill="#1677cf"/><path d="M2 4h13v5l-6.500 4L2 9z" fill="#eef6fc"/><path d="M0 6l8.500 5L17 6v9H0z" fill="#2e9be8"/><path d="M0 15l8.500-5 8.500 5z" fill="#55b9f3"/></svg></button>
    <button class="open" aria-label="Photoshop"><svg width="14" height="14" viewBox="0 0 14 14"><path d="M.5.500h13v13H.5z" fill="#04202f" stroke="#2da3e8"/><text x="2" y="10" font-size="8" font-weight="bold" fill="#3db2f5" font-family="Open Sans">Ps</text></svg></button>
    <button aria-label="OneNote"><svg width="15" height="14" viewBox="0 0 15 14" style="stroke:none"><path d="M6 1h8v12H6z" fill="#e9dcec"/><path d="M10 3h4M10 6h4M10 9h4" stroke="#80397b"/><path d="M0 2l9-2v14l-9-2z" fill="#80397b"/><text x="2" y="10" font-size="8" font-weight="bold" fill="#fff" font-family="Open Sans">N</text></svg></button>
    <button aria-label="Chrome"><svg width="15" height="15" viewBox="0 0 16 16" style="stroke:none"><circle cx="8" cy="8" r="8" fill="#33a552"/><path d="M1 4a8 8 0 0114 0L8 8z" fill="#e84234"/><path d="M15 4a8 8 0 01-7 12l3-8-3-4z" fill="#fac116"/><circle cx="8" cy="8" r="4" fill="#fff"/><circle cx="8" cy="8" r="3" fill="#4285f4"/></svg></button>
    <button aria-label="InDesign"><svg width="14" height="14" viewBox="0 0 14 14"><path d="M.5.500h13v13H.5z" fill="#3a0a22" stroke="#e0408a"/><text x="3" y="10" font-size="8" font-weight="bold" fill="#f0569a" font-family="Open Sans">Id</text></svg></button>
    <button class="open" aria-label="Firefox"><svg width="16" height="16" viewBox="0 0 16 16" style="stroke:none"><path d="M1 8c0-3 1-4 2-5l1 1.500C6 4 8 3 9 0c3 2 6 4 6 8 0 5-3 8-7 8s-7-3-7-8z" fill="#ff7a2e"/><path d="M9 0c3 2 6 4 6 8l-2 4c0-5-3-6-4-8z" fill="#ffd23c"/><circle cx="7.500" cy="9" r="3.800" fill="#8347d1"/><path d="M3 7c2-1 4 0 5 1-2 0-2 1-3 2z" fill="#ff9f30"/><path d="M2 12c3 5 9 4 11 0-3 2-7 2-11 0z" fill="#ef3a57"/></svg></button>
    <button aria-label="Control Panel"><svg width="15" height="12" viewBox="0 0 15 12" style="stroke:none"><path d="M0 1h15v10H0z" fill="#75c7f0"/><circle cx="5" cy="5" r="2.500" fill="#2375bb"/><path d="M9 3h4M9 5.500h4M2 9h3M9 8.500h4" stroke="#fff"/></svg></button>
    <button aria-label="Word"><svg width="15" height="14" viewBox="0 0 15 14" style="stroke:none"><path d="M6 1h8v12H6z" fill="#e6edf7"/><path d="M9 4h4M9 6.500h4M9 9h4" stroke="#2a5699"/><path d="M0 2l9-2v14l-9-2z" fill="#2a5699"/><text x="1" y="10" font-size="8" font-weight="bold" fill="#fff" font-family="Open Sans">W</text></svg></button>
    <button class="open" aria-label="File Explorer"><svg width="16" height="14" viewBox="0 0 16 14" style="stroke:none"><path d="M1 1h6l1 1.500h7V13H1z" fill="#f2bd43"/><path d="M1 4h14v9H1z" fill="#fbdc7b"/><path d="M3 13V8h10v5h-3v-2H6v2z" fill="#4a9bcc"/></svg></button>
    <button class="open" aria-label="Bandicam"><svg width="16" height="16" viewBox="0 0 16 16"><circle cx="8" cy="8" r="7" fill="#111" stroke="#e6e6e6"/><circle cx="8" cy="8" r="4.800" fill="#f23523" stroke="none"/></svg></button>
    <button class="open" aria-label="CorelDRAW"><svg width="16" height="16" viewBox="0 0 16 16"><circle cx="8" cy="8" r="7" fill="#142012" stroke="#55b03b" stroke-width="1.500"/><path d="M3.500 3.500l3 .5 5.500 5 .5 3.500-3.500-.5-5-5.500z" fill="#f4f4f4" stroke="none"/><path d="M5 6.500l5 5M8 5.500l-2 2" stroke="#333" stroke-width=".8"/></svg></button>
  </div>
  <div class="tray ms-auto d-flex align-items-center">
    <svg width="13" height="13" viewBox="0 0 13 13"><path d="M7 0c7 3 7 12 0 13-3 .3-6-1-7-4 5 1 9-3 7-9z" fill="#ffc83a" stroke="none"/></svg>
    <span class="temp text-nowrap">48°F&nbsp; Clear</span>
    <button aria-label="Show hidden icons"><svg width="9" height="6" viewBox="0 0 9 6"><path d="M1 5l3.500-3.500L8 5"/></svg></button>
    <svg width="10" height="10" viewBox="0 0 10 10"><circle cx="5" cy="5" r="4.500" fill="#29b6c5"/><path d="M7 3.500a2.300 2.300 0 10.300 2H5"/></svg>
    <svg width="8" height="12" viewBox="0 0 8 12"><rect x="1.500" y="1" width="5" height="7" rx="1" fill="#f0f0f0"/><path d="M4 8v3M2 11h4"/></svg>
    <svg width="12" height="11" viewBox="0 0 12 11"><path d="M11 5.500L9.500 7H7l-2 3.500H4L5 7H2.500L1 8V3l1.500 1H5L4 .5h1L7 4h2.500z" stroke-width="1"/></svg>
    <svg class="gap-tray" width="12" height="10" viewBox="0 0 13 10"><path d="M1 3.500h2L5 1.500v7L3 6.500H1zM7 3v4M9 2c1 2 1 4 0 6M11 1c1.500 3 1.500 5 0 8" stroke-width="1"/></svg>
    <span>فا</span>
    <div class="clock text-center"><div>8:45 PM</div><div>2/22/2022</div></div>
    <button class="me-3" aria-label="Notifications"><svg width="12" height="12" viewBox="0 0 12 12"><path d="M1 1h10v8H7.500L6 11 4.500 9H1z"/></svg></button>
  </div>
</nav>

<div class="recbar d-flex align-items-center">
  <svg width="52" height="10" viewBox="0 0 52 10"><path d="M0 1h8M0 5h8M0 9h8M13 2.500h6V9h-6zM16 1h5v5M28 1v7M26 6l2 2 2-2M42 1v7M40 6l2 2 2-2M44 9h5M49 9V5" stroke-width="1"/><circle cx="34" cy="5" r="2.600"/><path d="M36 7l2 2"/></svg>
  <span class="rectime text-nowrap">Recording [00:01:23]</span>
  <svg width="25" height="10" viewBox="0 0 25 10"><path d="M1 1v8M6 1v8" stroke="#c5322b" stroke-width="2"/><path d="M17 1h8v8h-8z" fill="#ed4030" stroke="none"/></svg>
  <svg class="ms-3" width="46" height="10" viewBox="0 0 46 10"><path d="M0 2h3l1-1.500h3L8 2h2v7H0z" fill="#f0f0f0" stroke="none"/><circle cx="5" cy="5.500" r="2" fill="#f0f0f0" stroke="#1b222b"/><path d="M14.500 2v6M31.500 2v6" stroke="#59616b" stroke-width="1"/><path d="M19 9l1-2.500L24.500 2l2 1.500L21 8.500z" fill="#fff"/><path d="M35.500 1.500l7 7M42.500 1.500l-7 7" stroke-width="1"/></svg>
</div>
<div class="mark-url"><span>www.</span><b>BANDICAM</b><span>.com</span></div>

<script src="https://cdn.jsdelivr.net/npm/bootstrap@5.3.0/dist/js/bootstrap.bundle.min.js"></script>
<script>
// Rulers: 20 mm between labels, a short tick each 2 mm
const scale = 1.9645;
let h = '', v = '';
for (let mm = -108; mm <= 402; mm += 2) {
  const x = Math.round(218 + mm * scale) + .5, big = mm % 20 === 0;
  if (x > 0) h += `<path d="M${x} ${big ? 7 : 10}v${big ? 4 : 1}"/>`;
  if (big && mm <= 380 && x > 5) h += `<text x="${x}" y="7" text-anchor="middle">${Math.abs(mm)}</text>`;
}
h += '<text x="986" y="7">millimeters</text><path d="M196.500 1v11" stroke="#222" stroke-dasharray="2 1"/>';
for (let mm = 244; mm >= -34; mm -= 2) {
  const y = Math.round(480 - mm * scale) + .5, big = mm % 20 === 0;
  v += `<path d="M${big ? 7 : 10} ${y}h${big ? 4 : 1}"/>`;
  if (big && mm >= 0) v += `<text transform="translate(8 ${y}) rotate(-90)" text-anchor="middle">${mm}</text>`;
}
v += '<path d="M1 151.500h11" stroke="#222" stroke-dasharray="2 1"/>';
document.getElementById('hruler').innerHTML = h;
document.getElementById('vruler').innerHTML = v;

const none = 'linear-gradient(135deg,#fff 46%,#c88 46%,#c88 54%,#fff 54%)';
const colors = [none,'#1f1d1e','#373536','#4f4f51','#67686a','#7d7f82','#929497','#a5a7a9','#b9bbbd','#cacbcd','#dcddde','#fff',
 '#2e3192','#00a2ff','#009a52','#ffe800','#ff2f1f','#ff1493','#a9518c','#ff8811','#ffb3b0','#80685c','#c6c4e8','#9a95cb','#6484d0',
 '#6f6cb4','#7c7aa6','#3d5b90','#4d4a78','#586e98','#0083e0','#80d4ff','#9bb7d1','#7c94ab','#5b7080','#3f4f5b','#446468','#287268',
 '#528584','#3f9585','#458f62','#38bcd6','#3199b0','#97b5a6','#c8e8d2','#90c8a5'];
document.getElementById('palette').innerHTML = colors.map(c => `<div class="cell" style="background:${c}"></div>`).join('');
document.getElementById('docpalette').innerHTML =
 [none,'#1f1d1e','#fff','#ff8a1d','#2e3192','#d6c66c','#a88a62','#d7a960'].map(c => `<div class="sw" style="background:${c}"></div>`).join('');
</script>
</body>
</html>
